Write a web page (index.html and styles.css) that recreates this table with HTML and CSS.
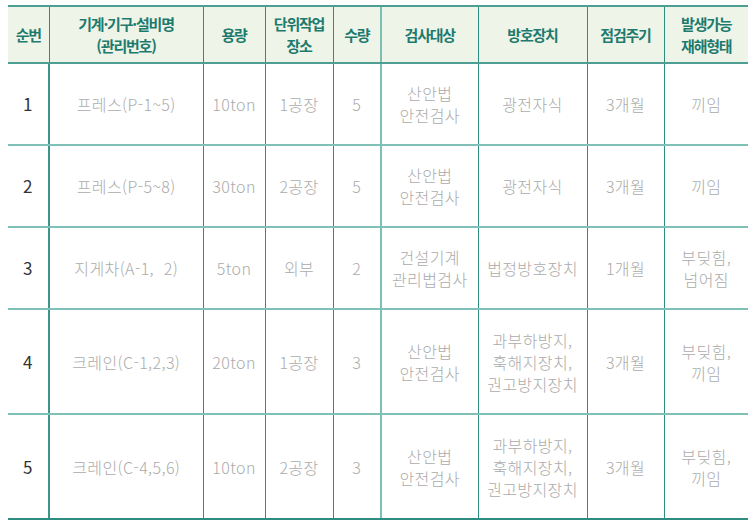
FILE: index.html
```html
<!DOCTYPE html>
<html lang="ko">
<head>
<meta charset="utf-8">
<link rel="stylesheet" href="styles.css">
</head>
<body>
<div class="wrap">
<table class="tbl">
<colgroup>
<col class="c1"><col class="c2"><col class="c3"><col class="c4"><col class="c5"><col class="c6"><col class="c7"><col class="c8"><col class="c9">
</colgroup>
<thead>
<tr>
<th>순번</th>
<th>기계·기구·설비명<br>(관리번호)</th>
<th>용량</th>
<th>단위작업<br>장소</th>
<th>수량</th>
<th class="sep">검사대상</th>
<th>방호장치</th>
<th>점검주기</th>
<th>발생가능<br>재해형태</th>
</tr>
</thead>
<tbody>
<tr class="r">
<td class="no">1</td>
<td>프레스(P-1~5)</td>
<td>10ton</td>
<td>1공장</td>
<td>5</td>
<td class="sep">산안법<br>안전검사</td>
<td>광전자식</td>
<td>3개월</td>
<td>끼임</td>
</tr>
<tr class="r">
<td class="no">2</td>
<td>프레스(P-5~8)</td>
<td>30ton</td>
<td>2공장</td>
<td>5</td>
<td class="sep">산안법<br>안전검사</td>
<td>광전자식</td>
<td>3개월</td>
<td>끼임</td>
</tr>
<tr class="r">
<td class="no">3</td>
<td>지게차(A-1,&nbsp;&nbsp;2)</td>
<td>5ton</td>
<td>외부</td>
<td>2</td>
<td class="sep">건설기계<br>관리법검사</td>
<td>법정방호장치</td>
<td>1개월</td>
<td>부딪힘,<br>넘어짐</td>
</tr>
<tr class="r tall">
<td class="no">4</td>
<td>크레인(C-1,2,3)</td>
<td>20ton</td>
<td>1공장</td>
<td>3</td>
<td class="sep">산안법<br>안전검사</td>
<td>과부하방지,<br>훅해지장치,<br>권고방지장치</td>
<td>3개월</td>
<td>부딪힘,<br>끼임</td>
</tr>
<tr class="r tall last">
<td class="no">5</td>
<td>크레인(C-4,5,6)</td>
<td>10ton</td>
<td>2공장</td>
<td>3</td>
<td class="sep">산안법<br>안전검사</td>
<td>과부하방지,<br>훅해지장치,<br>권고방지장치</td>
<td>3개월</td>
<td>부딪힘,<br>끼임</td>
</tr>
</tbody>
</table>
</div>
</body>
</html>
```

FILE: styles.css
```css
html, body {
  margin: 0;
  padding: 0;
  background: #ffffff;
}
.wrap {
  padding: 5px 8px 0 8px;
}
.tbl {
  width: 740px;
  border-collapse: collapse;
  table-layout: fixed;
  font-family: "Noto Sans CJK KR", "Noto Sans", sans-serif;
}
.c1 { width: 41px; }
.c2 { width: 154px; }
.c3 { width: 62px; }
.c4 { width: 68px; }
.c5 { width: 48px; }
.c6 { width: 97px; }
.c7 { width: 109px; }
.c8 { width: 77px; }
.c9 { width: 84px; }

.tbl th, .tbl td {
  text-align: center;
  vertical-align: middle;
  padding: 0;
  border-left: 1px solid #2e8c80;
  border-right: 1px solid #2e8c80;
}
.tbl th:first-child, .tbl td:first-child { border-left: none; }
.tbl th:last-child, .tbl td:last-child { border-right: none; }
.tbl th.sep, .tbl td.sep { border-left: 2px solid #7cbfb4; }
.tbl td.no { border-right: 2px solid #3d9488; }

.tbl thead th {
  height: 55px;
  background: #eef5e8;
  color: #1f7a6e;
  font-size: 15px;
  font-weight: 700;
  line-height: 22px;
  letter-spacing: -1.2px;
  border-top: 2px solid #4d9e93;
  border-bottom: 2px solid #4d9e93;
}
.tbl td {
  color: #ababab;
  font-size: 16px;
  font-weight: 300;
  line-height: 22px;
  letter-spacing: 0.4px;
  border-bottom: 2px solid #7fc1b6;
}
.tbl tr.r td { height: 80px; }
.tbl tr.tall td { height: 103px; }
.tbl tr.last td { border-bottom: 2px solid #2e8c80; }
.tbl td.no {
  color: #333333;
  font-size: 17px;
  font-weight: 400;
}
```
